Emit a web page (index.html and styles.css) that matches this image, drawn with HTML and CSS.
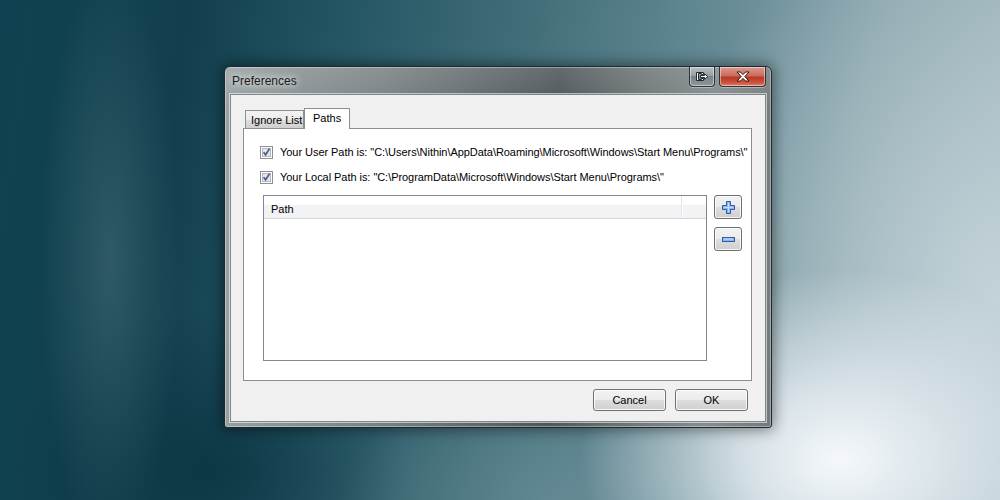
FILE: index.html
```html
<!DOCTYPE html>
<html>
<head>
<meta charset="utf-8">
<link rel="stylesheet" href="styles.css">
</head>
<body>
<div class="desktop">
  <div class="window">
    <div class="titlebar">
      <span class="title">Preferences</span>
      <div class="controls">
        <div class="cbtn ctool">
          <svg width="14" height="11" viewBox="0 0 14 11">
            <path d="M1.5 1.5 H8.5 V3.5 H6.5 V2.5 H3.5 V8.5 H6.5 V7.5 H8.5 V9.5 H1.5 Z" fill="#fff" stroke="#222a30" stroke-width="1"/>
            <path d="M5.5 4.5 H9.5 V2.8 L12.8 5.5 L9.5 8.2 V6.5 H5.5 Z" fill="#fff" stroke="#222a30" stroke-width="1" stroke-linejoin="round"/>
          </svg>
        </div>
        <div class="cbtn cclose">
          <svg width="14" height="11" viewBox="0 0 14 11">
            <path d="M1 1 H4.5 L7 3.6 L9.5 1 H13 L8.8 5.5 L13 10 H9.5 L7 7.4 L4.5 10 H1 L5.2 5.5 Z" fill="#fff" stroke="#3b1410" stroke-width="1" stroke-linejoin="round"/>
          </svg>
        </div>
      </div>
    </div>
    <div class="frame-body">
      <div class="client">
        <div class="tabs">
          <div class="tab">Ignore List</div>
          <div class="tab active">Paths</div>
        </div>
        <div class="panel">
          <div class="check-row">
            <svg class="cb" width="13" height="13" viewBox="0 0 13 13">
              <rect x="0.5" y="0.5" width="12" height="12" fill="#fff" stroke="#8e8f8f"/>
              <rect x="2.5" y="2.5" width="8" height="8" fill="#e4e6e9" stroke="#b4b9bf"/>
              <path d="M3.6 6.2 L5.6 8.8 L9.6 2.6" fill="none" stroke="#4a5a86" stroke-width="1.7"/>
            </svg>
            <span class="check-text">Your User Path is: "C:\Users\Nithin\AppData\Roaming\Microsoft\Windows\Start Menu\Programs\"</span>
          </div>
          <div class="check-row">
            <svg class="cb" width="13" height="13" viewBox="0 0 13 13">
              <rect x="0.5" y="0.5" width="12" height="12" fill="#fff" stroke="#8e8f8f"/>
              <rect x="2.5" y="2.5" width="8" height="8" fill="#e4e6e9" stroke="#b4b9bf"/>
              <path d="M3.6 6.2 L5.6 8.8 L9.6 2.6" fill="none" stroke="#4a5a86" stroke-width="1.7"/>
            </svg>
            <span class="check-text">Your Local Path is: "C:\ProgramData\Microsoft\Windows\Start Menu\Programs\"</span>
          </div>
          <div class="list-row">
            <div class="listview">
              <div class="lv-header">
                <div class="lv-col">Path</div>
                <div class="lv-col lv-rest"></div>
              </div>
            </div>
            <div class="side-buttons">
              <div class="btn icon-btn">
                <svg width="13" height="13" viewBox="0 0 13 13">
                  <path d="M4.5 0.5 H8.5 V4.5 H12.5 V8.5 H8.5 V12.5 H4.5 V8.5 H0.5 V4.5 H4.5 Z" fill="#8db5ea" stroke="#2f5ea8"/>
                  <path d="M6.5 2 V11 M2 6.5 H11" stroke="#c9def7" stroke-width="1"/>
                </svg>
              </div>
              <div class="btn icon-btn">
                <svg width="13" height="5" viewBox="0 0 13 5">
                  <rect x="0.5" y="0.5" width="12" height="4" fill="#8db5ea" stroke="#2f5ea8"/>
                  <path d="M2 2 H11" stroke="#c9def7" stroke-width="1"/>
                </svg>
              </div>
            </div>
          </div>
        </div>
        <div class="dialog-buttons">
          <div class="btn text-btn">Cancel</div>
          <div class="btn text-btn">OK</div>
        </div>
      </div>
    </div>
  </div>
</div>
</body>
</html>
```

FILE: styles.css
```css
html, body {
  margin: 0;
  padding: 0;
}

.desktop {
  position: relative;
  width: 1000px;
  height: 500px;
  overflow: hidden;
  background:
    radial-gradient(ellipse 260px 190px at 840px 460px, rgba(245,248,251,1) 0%, rgba(228,236,241,0.85) 35%, rgba(200,214,221,0) 100%),
    radial-gradient(ellipse 330px 430px at 1000px 300px, rgba(200,214,220,0.9) 0%, rgba(180,198,205,0) 100%),
    radial-gradient(ellipse 220px 120px at 560px 500px, rgba(110,145,155,0.6) 0%, rgba(110,145,155,0) 100%),
    radial-gradient(ellipse 70px 300px at 110px 260px, rgba(70,110,120,0.55) 0%, rgba(70,110,120,0) 100%),
    radial-gradient(ellipse 200px 160px at 210px 470px, rgba(8,50,64,0.8) 0%, rgba(8,50,64,0) 100%),
    linear-gradient(98deg, #0f4250 0%, #123f4e 18%, #245563 32%, #3e6b77 48%, #5e8590 64%, #86a2aa 82%, #9fb6bd 100%);
  font-family: "Liberation Sans", Arial, sans-serif;
}

.window {
  position: absolute;
  left: 224px;
  top: 66px;
  width: 548px;
  height: 362px;
  box-sizing: border-box;
  border: 1px solid #1f2a2e;
  border-radius: 6px 6px 3px 3px;
  display: flex;
  flex-direction: column;
  background:
    linear-gradient(180deg, rgba(255,255,255,0.12) 0%, rgba(255,255,255,0) 40px),
    linear-gradient(92deg, #9aa3a5 0%, #8a9395 12%, #7a8385 28%, #646c6f 45%, #4f575a 60%, #6f7779 75%, #858d8f 88%, #727a7c 100%);
  box-shadow: 0 0 14px 2px rgba(0,0,0,0.45), inset 0 0 0 1px rgba(255,255,255,0.35);
}

.titlebar {
  height: 27px;
  display: flex;
  justify-content: space-between;
  align-items: flex-start;
  padding: 0 5px 0 7px;
  flex: none;
}

.title {
  margin-top: 7px;
  font-size: 12px;
  line-height: 15px;
  color: #1a1a1a;
  text-shadow: 0 0 6px rgba(255,255,255,0.9), 0 0 10px rgba(255,255,255,0.7);
}

.controls {
  display: flex;
  gap: 4px;
}

.cbtn {
  height: 20px;
  box-sizing: border-box;
  border: 1px solid #2c3437;
  border-top: none;
  border-radius: 0 0 4px 4px;
  display: flex;
  align-items: center;
  justify-content: center;
  box-shadow: inset 0 0 0 1px rgba(255,255,255,0.45), 0 1px 0 rgba(255,255,255,0.35);
}

.ctool {
  width: 26px;
  background: linear-gradient(180deg, #b8bfc2 0%, #98a0a3 45%, #7a8386 50%, #8e9699 100%);
}

.cclose {
  width: 47px;
  background: linear-gradient(180deg, #dc9c91 0%, #ca6b5c 45%, #b83a26 55%, #c8503a 80%, #dd806a 100%);
}

.frame-body {
  flex: 1;
  display: flex;
  padding: 0 5px 5px;
}

.client {
  flex: 1;
  box-sizing: border-box;
  border: 1px solid #80878b;
  box-shadow: 0 0 0 1px rgba(255,255,255,0.55);
  background: #f0f0f0;
  padding: 13px 13px 0 12px;
  display: flex;
  flex-direction: column;
  font-size: 11px;
  color: #000;
}

.tabs {
  display: flex;
  align-items: flex-end;
  height: 21px;
  margin-bottom: -1px;
  padding-left: 2px;
  position: relative;
  z-index: 1;
}

.tab {
  box-sizing: border-box;
  height: 18px;
  margin-bottom: 1px;
  width: 59px;
  border: 1px solid #8c8e94;
  border-bottom: none;
  background: linear-gradient(180deg, #f3f3f3 0%, #ebebeb 50%, #dddddd 55%, #cfcfcf 100%);
  padding: 3px 0 0 5px;
  line-height: 13px;
}

.tab.active {
  width: 46px;
  height: 21px;
  margin-bottom: 0;
  background: #fff;
  padding: 3px 0 0 8px;
}

.panel {
  box-sizing: border-box;
  height: 253px;
  border: 1px solid #8c8e94;
  background: #fff;
  overflow: hidden;
  padding: 17px 0 0 16px;
  display: flex;
  flex-direction: column;
}

.check-row {
  display: flex;
  align-items: center;
  height: 13px;
  gap: 7px;
  white-space: nowrap;
  margin-bottom: 12px;
  letter-spacing: -0.05px;
}

.cb {
  flex: none;
  display: block;
}

.check-text {
  line-height: 13px;
}

.list-row {
  display: flex;
  align-items: flex-start;
  gap: 7px;
  padding-left: 3px;
  margin-top: -1px;
}

.listview {
  box-sizing: border-box;
  width: 444px;
  height: 166px;
  border: 1px solid #828790;
  background: #fff;
}

.lv-header {
  display: flex;
  height: 23px;
  box-sizing: border-box;
  border-bottom: 1px solid #d5d5d5;
  background: linear-gradient(180deg, #ffffff 0%, #ffffff 38%, #f3f4f6 40%, #f1f2f4 100%);
}

.lv-col {
  width: 418px;
  box-sizing: border-box;
  border-right: 1px solid #e3e6ea;
  padding: 7px 0 0 7px;
  line-height: 13px;
}

.lv-col.lv-rest {
  flex: 1;
  border-right: none;
  border-left: 1px solid #ffffff;
}

.side-buttons {
  display: flex;
  flex-direction: column;
  gap: 8px;
}

.btn {
  box-sizing: border-box;
  border: 1px solid #707070;
  border-radius: 3px;
  background: linear-gradient(180deg, #f2f2f2 0%, #ebebeb 50%, #dddddd 52%, #cfcfcf 100%);
  box-shadow: inset 0 0 0 1px rgba(255,255,255,0.8);
  display: flex;
  align-items: center;
  justify-content: center;
}

.icon-btn {
  width: 28px;
  height: 24px;
}

.dialog-buttons {
  display: flex;
  justify-content: flex-end;
  gap: 9px;
  margin-top: 8px;
  padding-right: 4px;
}

.text-btn {
  width: 73px;
  height: 22px;
  line-height: 13px;
}
```
